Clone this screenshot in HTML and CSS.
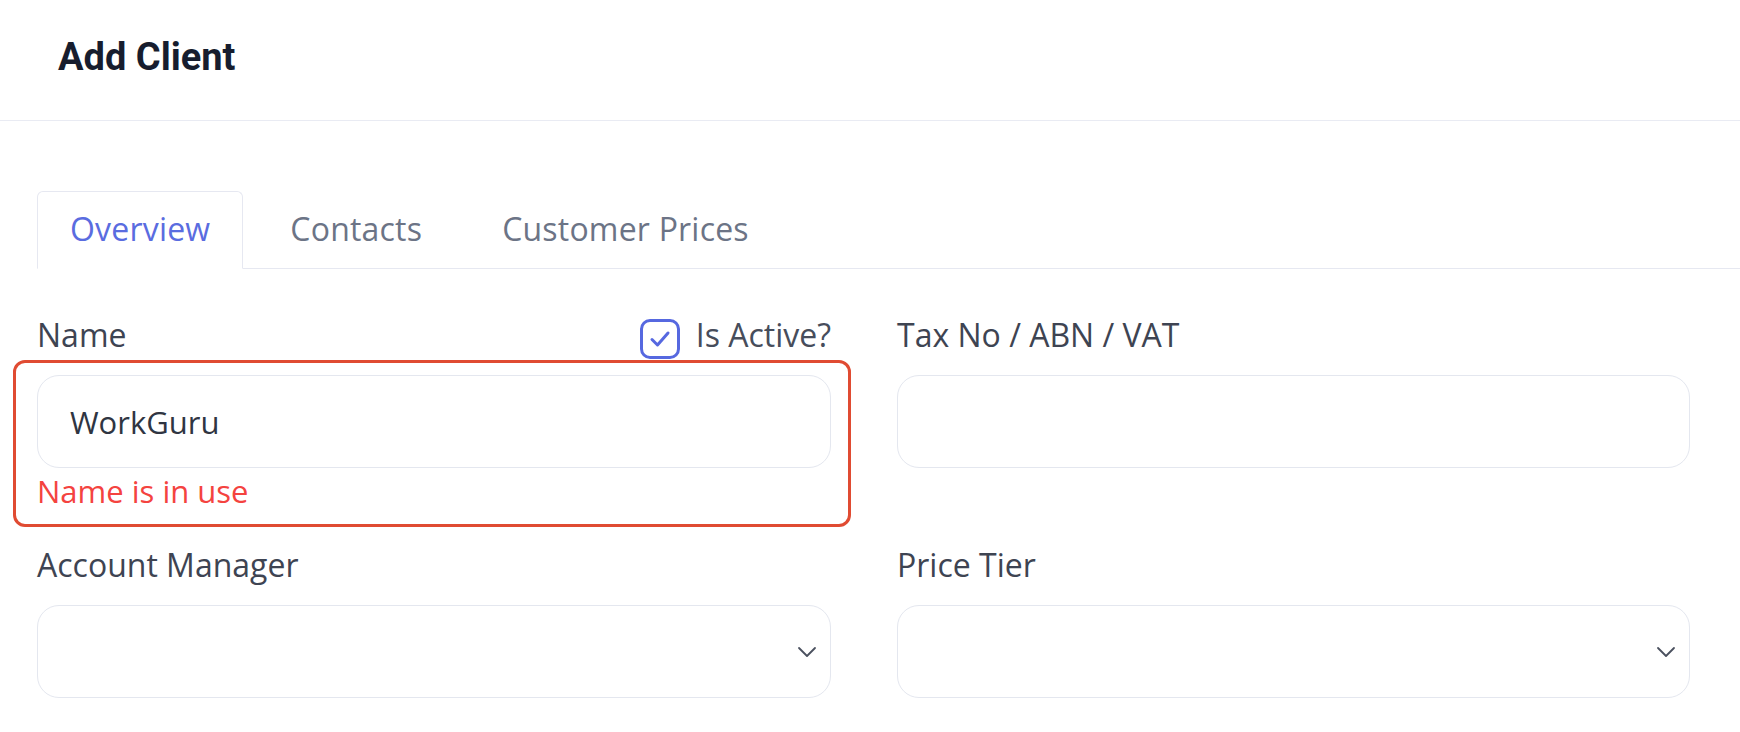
FILE: index.html
```html
<!DOCTYPE html>
<html lang="en">
<head>
<meta charset="utf-8">
<title>Add Client</title>
<link rel="stylesheet" href="styles.css">
</head>
<body>
<header class="page-header">
  <h1 class="page-title">Add Client</h1>
</header>
<main class="content">
  <ul class="tabs">
    <li class="tab active">Overview</li>
    <li class="tab">Contacts</li>
    <li class="tab">Customer Prices</li>
  </ul>
  <div class="form-grid">
    <div class="field">
      <div class="label-row">
        <label class="label">Name</label>
        <label class="check">
          <span class="checkbox">
            <svg width="26" height="26" viewBox="0 0 26 26"><polyline points="5,13.5 10.5,19 21,7" fill="none" stroke="#5668e0" stroke-width="3" stroke-linecap="round" stroke-linejoin="round"/></svg>
          </span>
          <span class="check-text">Is Active?</span>
        </label>
      </div>
      <div class="error-wrap">
        <div class="input">WorkGuru</div>
        <div class="error">Name is in use</div>
        <div class="highlight"></div>
      </div>
    </div>
    <div class="field">
      <div class="label-row">
        <label class="label">Tax No / ABN / VAT</label>
      </div>
      <div class="input"></div>
    </div>
    <div class="field">
      <div class="label-row">
        <label class="label">Account Manager</label>
      </div>
      <div class="input select">
        <svg class="chevron" width="20" height="12" viewBox="0 0 20 12"><polyline points="2,2 10,10 18,2" fill="none" stroke="#4a505e" stroke-width="1.8" stroke-linecap="round" stroke-linejoin="round"/></svg>
      </div>
    </div>
    <div class="field">
      <div class="label-row">
        <label class="label">Price Tier</label>
      </div>
      <div class="input select">
        <svg class="chevron" width="20" height="12" viewBox="0 0 20 12"><polyline points="2,2 10,10 18,2" fill="none" stroke="#4a505e" stroke-width="1.8" stroke-linecap="round" stroke-linejoin="round"/></svg>
      </div>
    </div>
  </div>
</main>
</body>
</html>
```
FILE: styles.css
```css
html, body {
  margin: 0;
  padding: 0;
  background: #ffffff;
}

body {
  font-family: "Open Sans", "Noto Sans", sans-serif;
  color: #3e4452;
}

.page-header {
  padding: 37px 0 43px 58px;
  border-bottom: 1px solid #e9ebf3;
}

.page-title {
  margin: 0;
  font-family: Roboto, "Liberation Sans", sans-serif;
  font-weight: 700;
  font-size: 38px;
  line-height: 40px;
  color: #171d2e;
}

.content {
  padding: 70px 0 0 37px;
}

.tabs {
  display: flex;
  gap: 14px;
  list-style: none;
  margin: 0;
  padding: 0;
  border-bottom: 1px solid #e6e8f1;
}

.tab {
  padding: 17px 32px 19px;
  font-size: 32px;
  line-height: 40px;
  letter-spacing: 0.2px;
  color: #6c7486;
  border: 1px solid transparent;
  border-radius: 6px 6px 0 0;
  margin-bottom: -1px;
}

.tab.active {
  color: #5a6ce0;
  background: #ffffff;
  border-color: #e6e8f1;
  border-bottom-color: #ffffff;
}

.form-grid {
  display: grid;
  grid-template-columns: 794px 793px;
  column-gap: 66px;
  row-gap: 34px;
  margin-top: 46px;
  align-items: start;
}

.label-row {
  display: flex;
  justify-content: space-between;
  align-items: center;
  height: 40px;
  margin-bottom: 20px;
}

.label {
  font-size: 32px;
  line-height: 40px;
  color: #3e4452;
}

.check {
  display: flex;
  align-items: center;
  gap: 16px;
}

.checkbox {
  width: 40px;
  height: 40px;
  box-sizing: border-box;
  border: 3px solid #5668e0;
  border-radius: 10px;
  display: flex;
  align-items: center;
  justify-content: center;
  margin-top: 8px;
}

.check-text {
  font-size: 32px;
  line-height: 40px;
  color: #474d5b;
}

.input {
  height: 93px;
  box-sizing: border-box;
  border: 1px solid #e4e7ef;
  border-radius: 22px;
  display: flex;
  align-items: center;
  padding-left: 32px;
  font-size: 31px;
  color: #2f3542;
}

.select {
  justify-content: flex-end;
  padding-right: 13px;
}

.error-wrap {
  position: relative;
}

.error {
  margin-top: 3px;
  font-size: 31px;
  line-height: 40px;
  color: #f4433f;
}

.highlight {
  position: absolute;
  top: -15px;
  right: -20px;
  bottom: -16px;
  left: -24px;
  border: 3px solid #e04b32;
  border-radius: 12px;
  pointer-events: none;
}
```
